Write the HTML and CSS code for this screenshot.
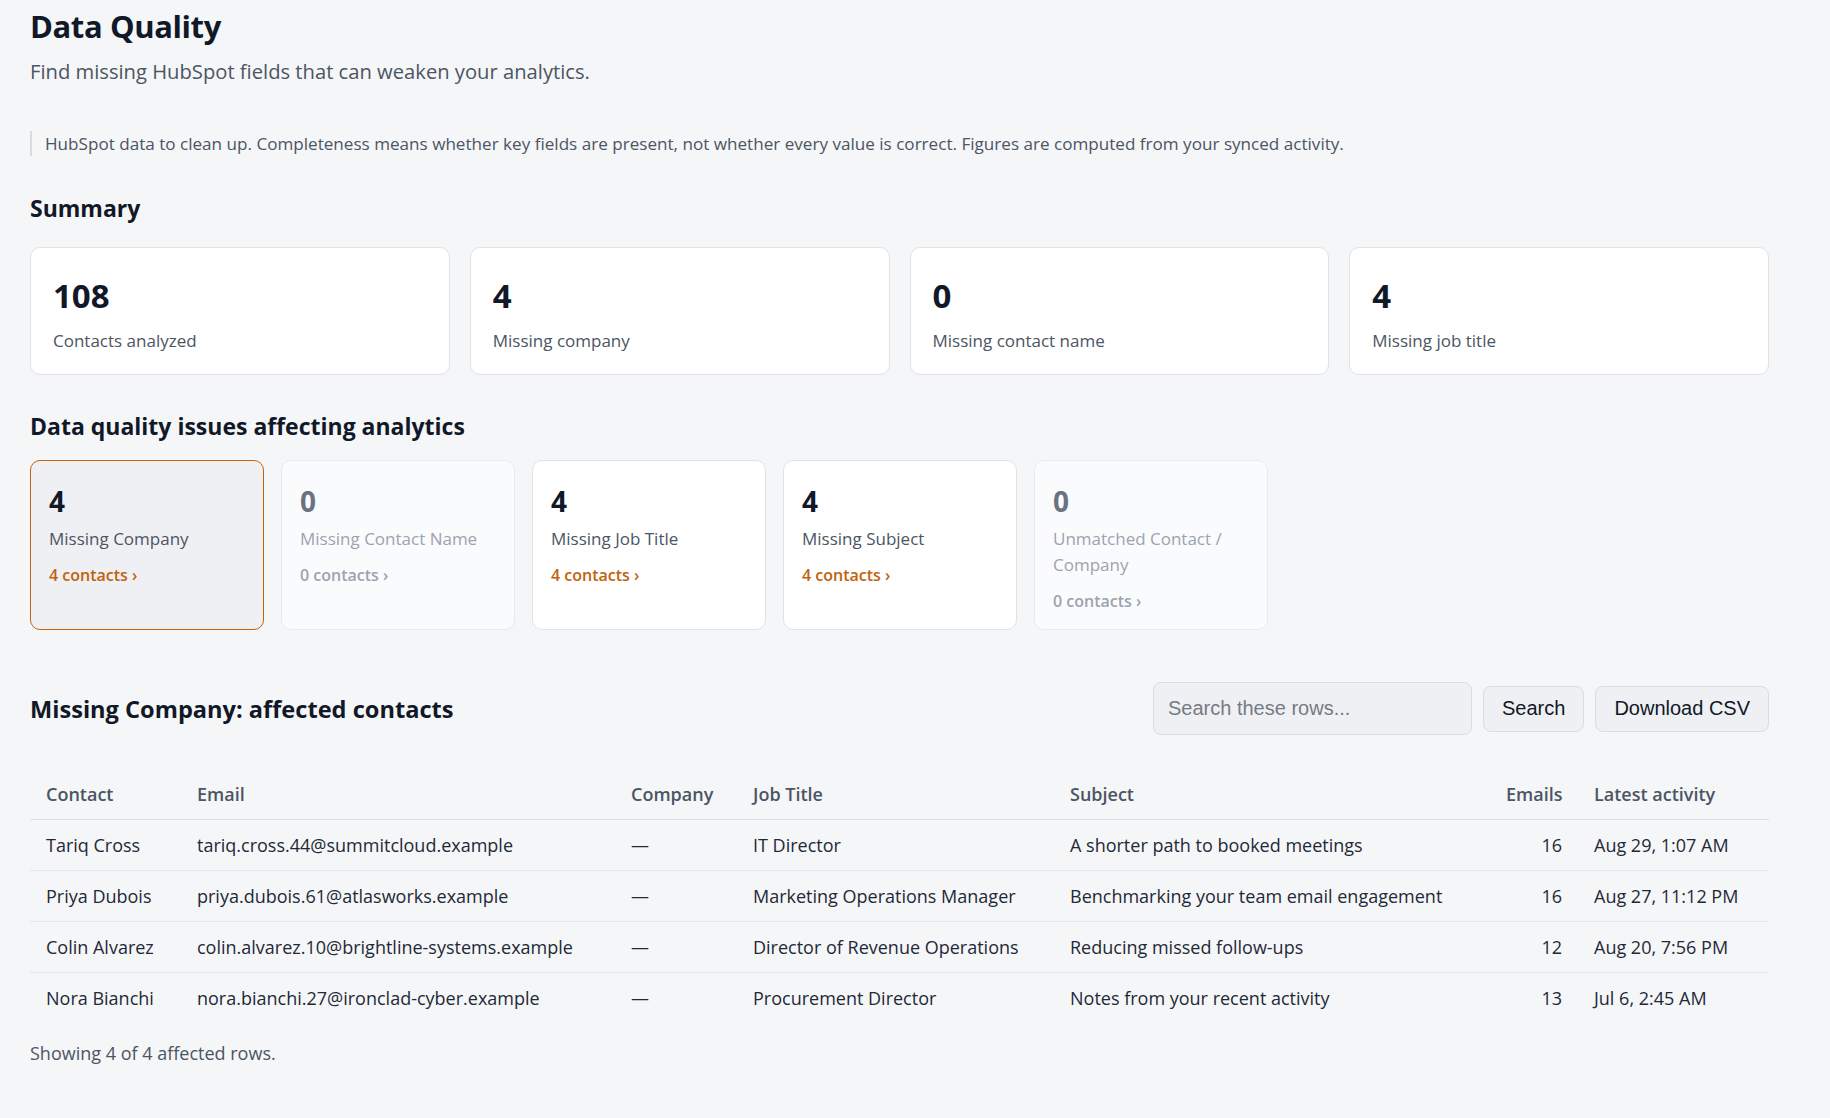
FILE: index.html
```html
<!DOCTYPE html>
<html lang="en">
<head>
<meta charset="utf-8">
<title>Data Quality</title>
<link rel="stylesheet" href="styles.css">
</head>
<body>
<main class="page">
  <header class="page-head">
    <h1 class="title">Data Quality</h1>
    <p class="subtitle">Find missing HubSpot fields that can weaken your analytics.</p>
  </header>

  <p class="note">HubSpot data to clean up. Completeness means whether key fields are present, not whether every value is correct. Figures are computed from your synced activity.</p>

  <section class="section summary">
    <h2 class="section-title">Summary</h2>
    <div class="summary-grid">
      <div class="stat-card"><div class="stat-value">108</div><div class="stat-label">Contacts analyzed</div></div>
      <div class="stat-card"><div class="stat-value">4</div><div class="stat-label">Missing company</div></div>
      <div class="stat-card"><div class="stat-value">0</div><div class="stat-label">Missing contact name</div></div>
      <div class="stat-card"><div class="stat-value">4</div><div class="stat-label">Missing job title</div></div>
    </div>
  </section>

  <section class="section issues">
    <h2 class="section-title">Data quality issues affecting analytics</h2>
    <div class="issue-grid">
      <a class="issue-card active" href="#">
        <span class="issue-value">4</span>
        <span class="issue-label">Missing Company</span>
        <span class="issue-link">4 contacts ›</span>
      </a>
      <a class="issue-card empty" href="#">
        <span class="issue-value">0</span>
        <span class="issue-label">Missing Contact Name</span>
        <span class="issue-link">0 contacts ›</span>
      </a>
      <a class="issue-card" href="#">
        <span class="issue-value">4</span>
        <span class="issue-label">Missing Job Title</span>
        <span class="issue-link">4 contacts ›</span>
      </a>
      <a class="issue-card" href="#">
        <span class="issue-value">4</span>
        <span class="issue-label">Missing Subject</span>
        <span class="issue-link">4 contacts ›</span>
      </a>
      <a class="issue-card empty" href="#">
        <span class="issue-value">0</span>
        <span class="issue-label">Unmatched Contact / Company</span>
        <span class="issue-link">0 contacts ›</span>
      </a>
    </div>
  </section>

  <section class="section affected">
    <div class="affected-head">
      <h2 class="section-title affected-title">Missing Company: affected contacts</h2>
      <form class="controls" onsubmit="return false;">
        <input class="search-input" type="text" placeholder="Search these rows...">
        <button class="btn" type="submit">Search</button>
        <button class="btn" type="button">Download CSV</button>
      </form>
    </div>

    <table class="rows">
      <colgroup>
        <col class="c-contact"><col class="c-email"><col class="c-company"><col class="c-job"><col class="c-subject"><col class="c-emails"><col class="c-latest">
      </colgroup>
      <thead>
        <tr><th>Contact</th><th>Email</th><th>Company</th><th>Job Title</th><th>Subject</th><th class="num">Emails</th><th>Latest activity</th></tr>
      </thead>
      <tbody>
        <tr><td>Tariq Cross</td><td>tariq.cross.44@summitcloud.example</td><td>—</td><td>IT Director</td><td>A shorter path to booked meetings</td><td class="num">16</td><td>Aug 29, 1:07 AM</td></tr>
        <tr><td>Priya Dubois</td><td>priya.dubois.61@atlasworks.example</td><td>—</td><td>Marketing Operations Manager</td><td>Benchmarking your team email engagement</td><td class="num">16</td><td>Aug 27, 11:12 PM</td></tr>
        <tr><td>Colin Alvarez</td><td>colin.alvarez.10@brightline-systems.example</td><td>—</td><td>Director of Revenue Operations</td><td>Reducing missed follow-ups</td><td class="num">12</td><td>Aug 20, 7:56 PM</td></tr>
        <tr><td>Nora Bianchi</td><td>nora.bianchi.27@ironclad-cyber.example</td><td>—</td><td>Procurement Director</td><td>Notes from your recent activity</td><td class="num">13</td><td>Jul 6, 2:45 AM</td></tr>
      </tbody>
    </table>
    <p class="foot">Showing 4 of 4 affected rows.</p>
  </section>
</main>
</body>
</html>
```

FILE: styles.css
```css
* { box-sizing: border-box; }

html, body {
  margin: 0;
  background: #f5f6f8;
}

body {
  font-family: "Open Sans", "Noto Sans", sans-serif;
  color: #111827;
}

.page {
  width: 1739px;
  margin-left: 30px;
  padding-top: 4px;
  padding-bottom: 40px;
}

.title {
  margin: 0;
  font-size: 31px;
  line-height: 44px;
  font-weight: 700;
  color: #111827;
  letter-spacing: -0.4px;
}

.subtitle {
  margin: 9px 0 0;
  font-size: 20.2px;
  line-height: 28px;
  color: #4b5563;
}

.note {
  margin: 46px 0 0;
  border-left: 2px solid #d7dae0;
  padding: 0 0 0 13px;
  font-size: 17.1px;
  line-height: 25px;
  color: #4b5563;
}

.section-title {
  margin: 0;
  font-size: 23px;
  line-height: 32px;
  font-weight: 700;
  color: #111827;
}

.section.summary { margin-top: 36px; }
.section.issues { margin-top: 35px; }
.section.affected { margin-top: 52px; }

.summary-grid {
  margin-top: 23px;
  display: grid;
  grid-template-columns: repeat(4, 1fr);
  gap: 20px;
}

.stat-card {
  background: #ffffff;
  border: 1px solid #dfe2e7;
  border-radius: 10px;
  height: 128px;
  padding: 28px 22px 0;
}

.stat-value {
  font-size: 33px;
  line-height: 40px;
  font-weight: 700;
  color: #111827;
}

.stat-label {
  margin-top: 13px;
  font-size: 17px;
  line-height: 24px;
  color: #4b5563;
}

.issue-grid {
  margin-top: 18px;
  display: grid;
  grid-template-columns: repeat(5, 234px);
  gap: 17px;
}

.issue-card {
  display: flex;
  flex-direction: column;
  align-items: flex-start;
  background: #ffffff;
  border: 1px solid #dfe2e7;
  border-radius: 10px;
  padding: 22px 18px 17px;
  text-decoration: none;
  min-height: 169px;
}

.issue-card.active {
  background: #eff0f3;
  border-color: #c8620c;
}

.issue-card.empty {
  background: #fafbfc;
  border-color: #e8eaee;
}

.issue-value {
  font-size: 28px;
  line-height: 36px;
  font-weight: 700;
  color: #111827;
}

.issue-label {
  margin-top: 7px;
  font-size: 17px;
  line-height: 26px;
  color: #4b5563;
}

.issue-link {
  margin-top: 12px;
  font-size: 16px;
  line-height: 22px;
  font-weight: 600;
  color: #c2620c;
}

.issue-card.empty .issue-value { color: #6b7280; }
.issue-card.empty .issue-label { color: #9ca3af; }
.issue-card.empty .issue-link { color: #9ca3af; }

.affected-head {
  display: flex;
  align-items: center;
  justify-content: space-between;
}

.affected-title { font-size: 23.6px; }

.controls {
  display: flex;
  align-items: center;
  gap: 11px;
  margin: 0;
}

.search-input {
  width: 319px;
  height: 53px;
  padding: 0 14px;
  border: 1px solid #d9dce2;
  border-radius: 8px;
  background: #eef0f3;
  font-family: "Liberation Sans", Arial, sans-serif;
  font-size: 20px;
  color: #111827;
  outline: none;
}

.search-input::placeholder { color: #757b85; }

.btn {
  height: 46px;
  padding: 0 18px;
  border: 1px solid #d9dce2;
  border-radius: 8px;
  background: #eef0f3;
  font-family: "Liberation Sans", Arial, sans-serif;
  font-size: 20px;
  color: #111827;
  cursor: pointer;
}

.rows {
  width: 100%;
  margin-top: 34px;
  border-collapse: collapse;
  table-layout: fixed;
}

.c-contact { width: 151px; }
.c-email { width: 434px; }
.c-company { width: 122px; }
.c-job { width: 317px; }
.c-subject { width: 436px; }
.c-emails { width: 88px; }
.c-latest { width: 191px; }

.rows th,
.rows td {
  padding: 0 16px;
  text-align: left;
  white-space: nowrap;
  font-size: 18px;
}

.rows th {
  height: 50px;
  font-weight: 600;
  color: #4b5563;
  border-bottom: 1px solid #dcdfe4;
}

.rows td {
  height: 51px;
  color: #1f2937;
  border-bottom: 1px solid #e3e6ea;
}

.rows tbody tr:last-child td { border-bottom: none; }

.rows .num { text-align: right; }

.foot {
  margin: 18px 0 0;
  font-size: 18px;
  line-height: 24px;
  color: #4b5563;
}
```
